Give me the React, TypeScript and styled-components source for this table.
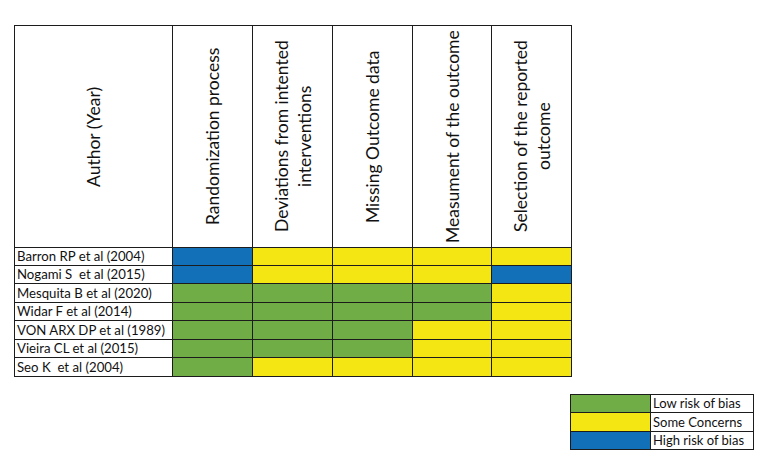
import React from "react";
import styled, { createGlobalStyle } from "styled-components";

const Global = createGlobalStyle`
  html, body { margin: 0; padding: 0; background: #ffffff; }
  body { font-family: Lato, "Liberation Sans", sans-serif; color: #111; }
`;

type Risk = "low" | "some" | "high";

const COLORS: Record<Risk, string> = {
  low: "#70ad47",
  some: "#f3e612",
  high: "#1170b8",
};

const Page = styled.div`
  width: 763px;
  height: 472px;
  box-sizing: border-box;
  padding: 25px 9px 0 14px;
  display: flex;
  flex-direction: column;
`;

const Table = styled.div`
  display: grid;
  grid-template-columns: 157px 79px 79px 79px 78px 79px;
  grid-template-rows: 221px 17px 17px 18px 17px 18px 17px 18px;
  gap: 1px;
  padding: 1px;
  background: #1c1c1c;
  width: max-content;
`;

const HeaderCell = styled.div`
  background: #fff;
  display: flex;
  align-items: center;
  justify-content: center;
  writing-mode: vertical-rl;
  transform: rotate(180deg);
  font-size: 17.5px;
  line-height: 23px;
  text-align: center;
  white-space: nowrap;
`;

const NameCell = styled.div`
  background: #fff;
  display: flex;
  align-items: center;
  padding-left: 2px;
  font-size: 13.2px;
  line-height: 17px;
  white-space: pre;
`;

const RiskCell = styled.div<{ $risk: Risk }>`
  background: ${(p) => COLORS[p.$risk]};
`;

const Legend = styled.div`
  align-self: flex-end;
  margin-top: 17px;
  display: grid;
  grid-template-columns: 79px 102px;
  grid-template-rows: 17px 18px 17px;
  gap: 1px;
  padding: 1px;
  background: #1c1c1c;
`;

const LegendLabel = styled.div`
  background: #fff;
  display: flex;
  align-items: center;
  padding-left: 2px;
  font-size: 13px;
  line-height: 17px;
  white-space: nowrap;
`;

const headers: string[][] = [
  ["Author (Year)"],
  ["Randomization process"],
  ["Deviations from intented", "interventions"],
  ["Missing Outcome data"],
  ["Measument of the outcome"],
  ["Selection of the reported", "outcome"],
];

const H: Risk = "high";
const S: Risk = "some";
const L: Risk = "low";

const rows: { name: string; risks: Risk[] }[] = [
  { name: "Barron RP et al (2004)", risks: [H, S, S, S, S] },
  { name: "Nogami S  et al (2015)", risks: [H, S, S, S, H] },
  { name: "Mesquita B et al (2020)", risks: [L, L, L, L, S] },
  { name: "Widar F et al (2014)", risks: [L, L, L, L, S] },
  { name: "VON ARX DP et al (1989)", risks: [L, L, L, S, S] },
  { name: "Vieira CL et al (2015)", risks: [L, L, L, S, S] },
  { name: "Seo K  et al (2004)", risks: [L, S, S, S, S] },
];

const legend: { risk: Risk; label: string }[] = [
  { risk: "low", label: "Low risk of bias" },
  { risk: "some", label: "Some Concerns" },
  { risk: "high", label: "High risk of bias" },
];

export default function App() {
  return (
    <>
      <Global />
      <Page>
        <Table>
          {headers.map((lines, i) => (
            <HeaderCell key={`h${i}`}>
              {lines.map((l, j) => (
                <React.Fragment key={j}>
                  {j > 0 && <br />}
                  {l}
                </React.Fragment>
              ))}
            </HeaderCell>
          ))}
          {rows.map((r) => (
            <React.Fragment key={r.name}>
              <NameCell>{r.name}</NameCell>
              {r.risks.map((risk, k) => (
                <RiskCell key={k} $risk={risk} />
              ))}
            </React.Fragment>
          ))}
        </Table>
        <Legend>
          {legend.map((l) => (
            <React.Fragment key={l.risk}>
              <RiskCell $risk={l.risk} />
              <LegendLabel>{l.label}</LegendLabel>
            </React.Fragment>
          ))}
        </Legend>
      </Page>
    </>
  );
}
